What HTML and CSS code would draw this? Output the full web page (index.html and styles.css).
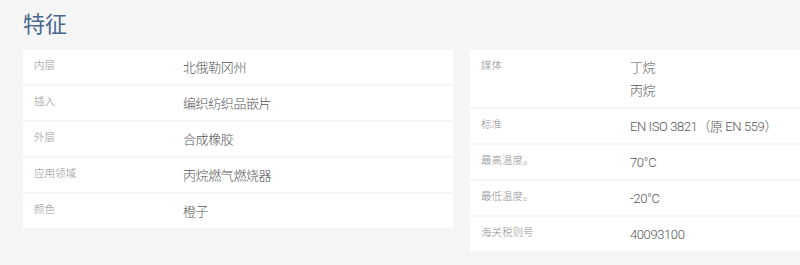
FILE: index.html
```html
<!DOCTYPE html>
<html lang="zh">
<head>
<meta charset="utf-8">
<link rel="stylesheet" href="styles.css">
</head>
<body>
<div class="page">
  <h2 class="title">特征</h2>
  <div class="tables">
    <div class="table table-left">
      <div class="row"><div class="label">内层</div><div class="value">北俄勒冈州</div></div>
      <div class="row"><div class="label">插入</div><div class="value">编织纺织品嵌片</div></div>
      <div class="row"><div class="label">外层</div><div class="value">合成橡胶</div></div>
      <div class="row"><div class="label">应用领域</div><div class="value">丙烷燃气燃烧器</div></div>
      <div class="row"><div class="label">颜色</div><div class="value">橙子</div></div>
    </div>
    <div class="table table-right">
      <div class="row"><div class="label">媒体</div><div class="value">丁烷<br>丙烷</div></div>
      <div class="row"><div class="label">标准</div><div class="value">EN ISO 3821（原 EN 559）</div></div>
      <div class="row"><div class="label">最高温度。</div><div class="value">70°C</div></div>
      <div class="row"><div class="label">最低温度。</div><div class="value">-20°C</div></div>
      <div class="row"><div class="label">海关税则号</div><div class="value">40093100</div></div>
    </div>
  </div>
</div>
</body>
</html>
```
FILE: styles.css
```css
html, body {
  margin: 0;
  padding: 0;
  overflow: hidden;
  background: #f5f5f5;
}
body {
  font-family: Roboto, "Noto Sans CJK SC", sans-serif;
}
.page {
  padding: 11px 0 0 23px;
}
.title {
  margin: 0 0 11px 0;
  font-size: 22px;
  line-height: 28px;
  font-weight: 400;
  color: #46688f;
}
.tables {
  display: flex;
  align-items: flex-start;
  gap: 17px;
}
.table {
  display: flex;
  flex-direction: column;
  gap: 2px;
}
.table-left {
  width: 430px;
  flex: none;
}
.table-right {
  flex: 1;
  min-width: 0;
}
.row {
  display: flex;
  background: #fff;
  padding: 6px 0 5px 11px;
}
.label {
  width: 149px;
  flex: none;
  font-size: 10.5px;
  line-height: 17px;
  padding-top: 1px;
  color: #8f8f8f;
  font-weight: 300;
}
.value {
  font-size: 13px;
  line-height: 23px;
  color: #555;
  font-weight: 300;
  letter-spacing: -0.4px;
  white-space: nowrap;
}
```
